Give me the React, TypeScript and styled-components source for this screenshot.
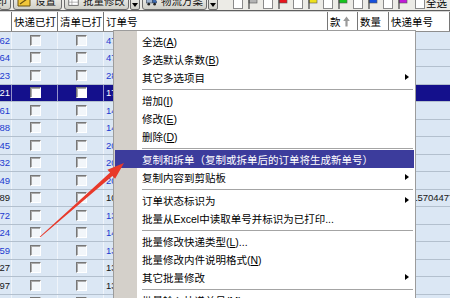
import React from "react"
import styled, { createGlobalStyle } from "styled-components"

const COLS = "12px 46px 46px 224px 30px 31px 1fr"

const GlobalStyle = createGlobalStyle`
  html, body {
    margin: 0;
    padding: 0;
    background: #ffffff;
  }
  body {
    font-family: "Liberation Sans", "Noto Sans CJK SC", sans-serif;
  }
`

const Screen = styled.div`
  position: relative;
  width: 450px;
  height: 298px;
  overflow: hidden;
  background: #dbe7f4;
`

/* ---------- toolbar (only its lower edge is in view) ---------- */

const Toolbar = styled.div`
  display: flex;
  align-items: flex-end;
  height: 10px;
  overflow: hidden;
  background: #ecebe6;
  border-bottom: 1px solid #5f5f5f;
`

const ToolButton = styled.div<{ $w: number; $end?: boolean }>`
  flex: none;
  display: flex;
  align-items: flex-end;
  justify-content: ${p => (p.$end ? "flex-end" : "flex-start")};
  gap: 4px;
  box-sizing: border-box;
  width: ${p => p.$w}px;
  height: 22px;
  margin-left: 2px;
  padding: 0 3px 1px;
  border: 1px solid #6c6c6c;
  border-radius: 3px;
  background: linear-gradient(#ffffff, #e6e6e1 55%, #cfcfc8);
  font-size: 10.5px;
  line-height: 13px;
  color: #111;
  white-space: nowrap;
  overflow: hidden;

  &:first-child {
    margin-left: -1px;
  }
`

const DropPart = styled.div`
  flex: none;
  display: flex;
  align-items: flex-end;
  justify-content: center;
  box-sizing: border-box;
  width: 10px;
  height: 22px;
  margin-left: 1px;
  padding-bottom: 2px;
  border: 1px solid #6c6c6c;
  border-radius: 2px;
  background: linear-gradient(#ffffff, #e6e6e1 55%, #cfcfc8);

  &::after {
    content: "";
    border-top: 4px solid #000;
    border-left: 3px solid transparent;
    border-right: 3px solid transparent;
  }
`

const FlagToggle = styled.div<{ $first?: boolean }>`
  flex: none;
  display: flex;
  align-items: flex-end;
  gap: 5px;
  margin: 0 5px 0 ${p => (p.$first ? "15px" : "0")};
  padding-bottom: 1px;
`

const SmallCheck = styled.span`
  flex: none;
  display: block;
  width: 10px;
  height: 10px;
  box-sizing: border-box;
  border: 1px solid #8a8a8a;
  background: #ffffff;
`

const SelectAll = styled.label`
  flex: none;
  display: flex;
  align-items: flex-end;
  gap: 1px;
  margin-left: 2px;
  padding-bottom: 1px;
  font-size: 10.5px;
  line-height: 12px;
  color: #000;
`

/* ---------- grid ---------- */

const HeaderRow = styled.div`
  display: grid;
  grid-template-columns: ${COLS};
  height: 21px;
  box-sizing: border-box;
  border-top: 1px solid #d4d4d4;
  border-bottom: 1px solid #8e8e8e;
  background: #ffffff;
`

const HeaderCell = styled.div`
  display: flex;
  align-items: center;
  gap: 2px;
  padding-left: 2px;
  border-right: 1px solid #767676;
  font-size: 10.5px;
  color: #000;
  white-space: nowrap;
  overflow: hidden;
`

const Row = styled.div<{ $selected?: boolean }>`
  display: grid;
  grid-template-columns: ${COLS};
  height: 17.5px;
  box-sizing: border-box;
  border-bottom: 1px solid #b3c0ce;
  background: ${p => (p.$selected ? "#14108c" : "#dbe7f4")};
`

const Cell = styled.div<{ $align?: "start" | "center" | "end"; $tone?: string }>`
  display: flex;
  align-items: center;
  justify-content: ${p =>
    p.$align === "center" ? "center" : p.$align === "end" ? "flex-end" : "flex-start"};
  padding: ${p => (p.$align === "end" ? "0 1px 0 0" : "0 0 0 2px")};
  border-right: 1px solid rgba(255, 255, 255, 0.55);
  font-size: 9.5px;
  color: ${p => p.$tone};
  white-space: nowrap;
  overflow: hidden;

  &:last-child {
    border-right: none;
  }
`

const GridCheck = styled.span<{ $on?: boolean }>`
  flex: none;
  display: block;
  width: 11px;
  height: 11px;
  box-sizing: border-box;
  border-style: solid;
  border-width: 1px;
  border-color: #777777 #ffffff #ffffff #777777;
  box-shadow: inset 1px 1px 0 #ababab;
  background: ${p => (p.$on ? "#ffffff" : "#f2f6fa")};
`

/* ---------- context menu ---------- */

const Menu = styled.div`
  position: absolute;
  left: 113px;
  top: 30px;
  width: 303px;
  box-sizing: border-box;
  padding: 1px;
  border: 1px solid #9c9c9c;
  background: linear-gradient(to right, #d4d0ca 0 23px, #ffffff 23px);
`

const MenuItem = styled.div<{ $active?: boolean }>`
  display: flex;
  align-items: center;
  justify-content: space-between;
  height: 18px;
  padding: 0 5px 0 27px;
  font-size: 10.5px;
  color: ${p => (p.$active ? "#ffffff" : "#000000")};
  background: ${p => (p.$active ? "#3c3c9c" : "transparent")};
  white-space: nowrap;
`

const Key = styled.span`
  text-decoration: underline;
`

const SubArrow = styled.span`
  display: block;
  border-left: 4px solid #000;
  border-top: 3.5px solid transparent;
  border-bottom: 3.5px solid transparent;
`

const MenuSeparator = styled.div`
  height: 1px;
  margin: 3px 1px 1px 27px;
  background: #a4a4a4;
`

const Overlay = styled.svg`
  position: absolute;
  left: 0;
  top: 0;
  pointer-events: none;
`

/* ---------- data ---------- */

type RowData = {
  no: string
  order: string
  tone: "blue" | "black"
  selected?: boolean
  express?: string
}

const rows: RowData[] = [
  { no: "1462", order: "4715062801", tone: "blue" },
  { no: "1464", order: "4715062803", tone: "blue" },
  { no: "1423", order: "2815062804", tone: "blue" },
  { no: "1421", order: "1715062805", tone: "blue", selected: true },
  { no: "1461", order: "1415062806", tone: "blue" },
  { no: "1388", order: "1415062807", tone: "blue" },
  { no: "1345", order: "2015062808", tone: "blue" },
  { no: "1332", order: "2015062809", tone: "blue" },
  { no: "1349", order: "2015062810", tone: "blue" },
  { no: "1389", order: "1015062811", tone: "black", express: "882315704477601" },
  { no: "1372", order: "1315062812", tone: "blue" },
  { no: "1324", order: "1415062813", tone: "blue" },
  { no: "1359", order: "1315062814", tone: "blue" },
  { no: "1327", order: "1315062815", tone: "black" },
  { no: "1397", order: "1315062816", tone: "black" },
  { no: "1398", order: "1315062817", tone: "black" },
]

const flagColors = ["#b4b4b4", "#e8141c", "#eee01c", "#16c41e", "#1650dc", "#c01ad6"]

const toneColor = (r: RowData) => (r.selected ? "#ffffff" : r.tone === "blue" ? "#1d3bd0" : "#161616")

function Flag({ color }: { color: string }) {
  return (
    <svg width="10" height="12" viewBox="0 0 10 12">
      <rect x="1" y="0" width="8" height="6" fill={color} stroke="#555" strokeWidth="0.6" />
      <line x1="1" y1="0" x2="1" y2="12" stroke="#444" strokeWidth="1.2" />
    </svg>
  )
}

function SortUp() {
  return (
    <svg width="7" height="11" viewBox="0 0 7 11">
      <path d="M3.5 0.5 L6.8 5 L4.6 5 L4.6 10.5 L2.4 10.5 L2.4 5 L0.2 5 Z" fill="#9a9a9a" />
    </svg>
  )
}

function SettingsIcon() {
  return (
    <svg width="14" height="14" viewBox="0 0 14 14">
      <path d="M1 4 L6 4 L7 2 L13 2 L13 12 L1 12 Z" fill="#f2c73a" stroke="#6a5212" strokeWidth="1" />
      <path d="M3 10 L10 5" stroke="#6a5212" strokeWidth="1.2" />
    </svg>
  )
}

function SheetIcon() {
  return (
    <svg width="14" height="14" viewBox="0 0 14 14">
      <rect x="1" y="1.5" width="12" height="11" fill="#ffffff" stroke="#555" />
      <path d="M1 5 H13 M1 8.5 H13 M5 1.5 V12.5" stroke="#8a8a8a" strokeWidth="0.8" />
    </svg>
  )
}

function TruckIcon() {
  return (
    <svg width="14" height="14" viewBox="0 0 14 14">
      <rect x="0.5" y="3" width="8" height="6.5" fill="#9fb4cf" stroke="#3c4a5e" strokeWidth="0.8" />
      <path d="M8.5 5 H11.5 L13.5 7.5 V9.5 H8.5 Z" fill="#3f6fb8" stroke="#2a3a55" strokeWidth="0.8" />
      <circle cx="3.5" cy="11" r="1.7" fill="#222" />
      <circle cx="11" cy="11" r="1.7" fill="#222" />
    </svg>
  )
}

function Arrow() {
  return (
    <Overlay width="450" height="298" viewBox="0 0 450 298">
      <polygon
        points="40.3,237.3 112.4,175.9 115.1,178.8 124,163 107.4,169.8 110.1,172.6 39.7,236.7"
        fill="#e8392a"
      />
    </Overlay>
  )
}

export default function App() {
  return (
    <Screen>
      <GlobalStyle />
      <Toolbar>
        <ToolButton $w={12} $end>
          印
        </ToolButton>
        <ToolButton $w={49}>
          <SettingsIcon />
          设置
        </ToolButton>
        <ToolButton $w={65}>
          <SheetIcon />
          批量修改
        </ToolButton>
        <DropPart />
        <ToolButton $w={65}>
          <TruckIcon />
          物流方案
        </ToolButton>
        <DropPart />
        {flagColors.map((c, i) => (
          <FlagToggle key={c} $first={i === 0}>
            <SmallCheck />
            <Flag color={c} />
          </FlagToggle>
        ))}
        <SelectAll>
          <SmallCheck />
          全选
        </SelectAll>
      </Toolbar>

      <HeaderRow>
        <HeaderCell />
        <HeaderCell>快递已打</HeaderCell>
        <HeaderCell>清单已打</HeaderCell>
        <HeaderCell>订单号</HeaderCell>
        <HeaderCell>
          款
          <SortUp />
        </HeaderCell>
        <HeaderCell>数量</HeaderCell>
        <HeaderCell>快递单号</HeaderCell>
      </HeaderRow>

      {rows.map(r => (
        <Row key={r.no} $selected={r.selected}>
          <Cell $align="end" $tone={toneColor(r)}>
            {r.no}
          </Cell>
          <Cell $align="center">
            <GridCheck $on={r.selected} />
          </Cell>
          <Cell $align="center">
            <GridCheck $on={r.selected} />
          </Cell>
          <Cell $tone={toneColor(r)}>{r.order}</Cell>
          <Cell />
          <Cell />
          <Cell $tone="#161616">{r.express}</Cell>
        </Row>
      ))}

      <Menu>
        <MenuItem>
          <span>
            全选(<Key>A</Key>)
          </span>
        </MenuItem>
        <MenuItem>
          <span>
            多选默认条数(<Key>B</Key>)
          </span>
        </MenuItem>
        <MenuItem>
          <span>其它多选项目</span>
          <SubArrow />
        </MenuItem>
        <MenuSeparator />
        <MenuItem>
          <span>
            增加(<Key>I</Key>)
          </span>
        </MenuItem>
        <MenuItem>
          <span>
            修改(<Key>E</Key>)
          </span>
        </MenuItem>
        <MenuItem>
          <span>
            删除(<Key>D</Key>)
          </span>
        </MenuItem>
        <MenuSeparator />
        <MenuItem $active>
          <span>复制和拆单（复制或拆单后的订单将生成新单号）</span>
        </MenuItem>
        <MenuItem>
          <span>复制内容到剪贴板</span>
          <SubArrow />
        </MenuItem>
        <MenuSeparator />
        <MenuItem>
          <span>订单状态标识为</span>
          <SubArrow />
        </MenuItem>
        <MenuItem>
          <span>批量从Excel中读取单号并标识为已打印...</span>
        </MenuItem>
        <MenuSeparator />
        <MenuItem>
          <span>
            批量修改快递类型(<Key>L</Key>)...
          </span>
        </MenuItem>
        <MenuItem>
          <span>
            批量修改内件说明格式(<Key>N</Key>)
          </span>
        </MenuItem>
        <MenuItem>
          <span>其它批量修改</span>
          <SubArrow />
        </MenuItem>
        <MenuSeparator />
        <MenuItem>
          <span>
            批量输入快递单号(<Key>M</Key>)...
          </span>
        </MenuItem>
      </Menu>

      <Arrow />
    </Screen>
  )
}
